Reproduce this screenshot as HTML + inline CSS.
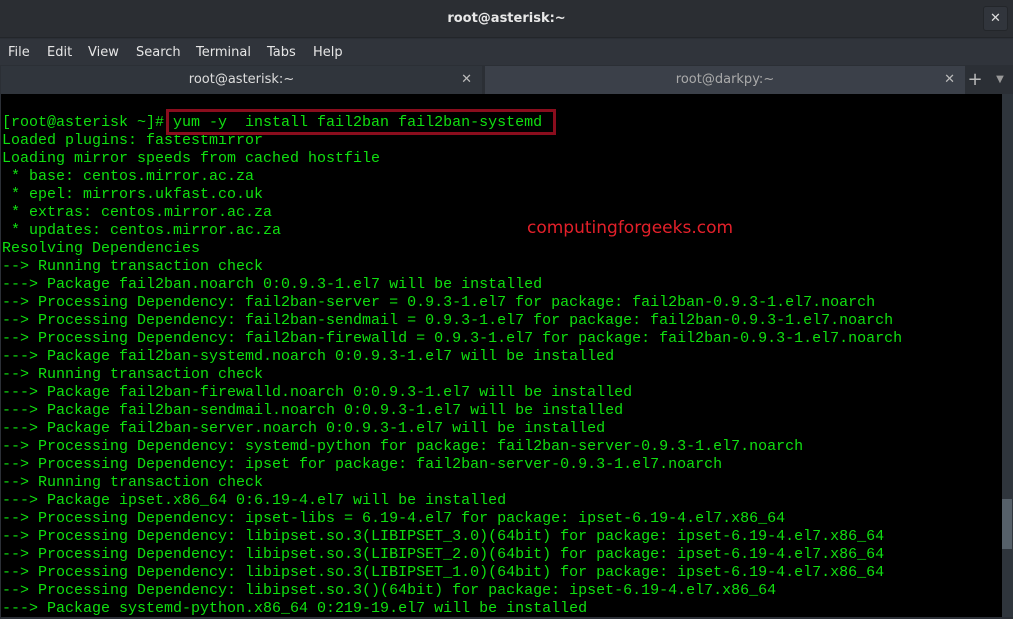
<!DOCTYPE html>
<html><head><meta charset="utf-8"><style>
*{margin:0;padding:0;box-sizing:border-box}
body{width:1013px;height:619px;background:#2b2f36;overflow:hidden;font-family:"DejaVu Sans","Liberation Sans",sans-serif;position:relative}
.title{position:absolute;left:0;top:0;width:1013px;height:38px;background:#2b2e33;border-bottom:1px solid #23262a;color:#e8e8e8;font-weight:bold;font-size:13px;text-align:center;line-height:38px}
.xbtn{position:absolute;right:5px;top:6px;width:25px;height:25px;border:1px solid #23262a;border-radius:3px;background:#31353c;color:#ddd;font-size:13px;line-height:23px;text-align:center}
.menu{position:absolute;left:0;top:39px;width:1013px;height:26px;background:#30343b;color:#e6e6e6;font-size:13px}
.menu span{position:absolute;top:6px}
.tabs{position:absolute;left:0;top:65px;width:1013px;height:29px;background:#2b2f35}
.tab{position:absolute;top:1px;height:28px;font-size:13px;line-height:28px;text-align:center}
.term{position:absolute;left:1px;top:94px;width:1001px;height:523px;background:#000}
.sb{position:absolute;left:1002px;top:94px;width:11px;height:523px;background:#2f353c}
.thumb{position:absolute;left:1002px;top:499px;width:10px;height:50px;background:#566069}
pre{position:absolute;left:2px;top:114px;font-family:"Liberation Mono",monospace;font-size:15px;line-height:18px;color:#10e010;white-space:pre}
.box{position:absolute;left:166px;top:109px;width:390px;height:26px;border:3px solid #8a0d1d}
.wm{position:absolute;left:527px;top:218px;color:#e3202a;font-family:"DejaVu Sans",sans-serif;font-size:17px}
</style></head><body>
<div class="title">root@asterisk:~<div class="xbtn">✕</div></div>
<div class="menu"><span style="left:8px">File</span><span style="left:47px">Edit</span><span style="left:88px">View</span><span style="left:136px">Search</span><span style="left:196px">Terminal</span><span style="left:267px">Tabs</span><span style="left:313px">Help</span></div>
<div class="tabs">
<div class="tab" style="left:1px;width:481px;background:#30353c;color:#ddd">root@asterisk:~<span style="position:absolute;right:10px;color:#bbb">✕</span></div>
<div class="tab" style="left:485px;width:480px;background:#3b4049;color:#aaa">root@darkpy:~<span style="position:absolute;right:10px;color:#bbb">✕</span></div>
<div class="tab" style="left:965px;width:20px;color:#bbb;font-size:18px">+</div>
<div class="tab" style="left:990px;width:20px;color:#999;font-size:10px">▼</div>
</div>
<div class="term"></div>
<div class="sb"></div><div class="thumb"></div>
<pre>[root@asterisk ~]# yum -y  install fail2ban fail2ban-systemd
Loaded plugins: fastestmirror
Loading mirror speeds from cached hostfile
 * base: centos.mirror.ac.za
 * epel: mirrors.ukfast.co.uk
 * extras: centos.mirror.ac.za
 * updates: centos.mirror.ac.za
Resolving Dependencies
--> Running transaction check
---> Package fail2ban.noarch 0:0.9.3-1.el7 will be installed
--> Processing Dependency: fail2ban-server = 0.9.3-1.el7 for package: fail2ban-0.9.3-1.el7.noarch
--> Processing Dependency: fail2ban-sendmail = 0.9.3-1.el7 for package: fail2ban-0.9.3-1.el7.noarch
--> Processing Dependency: fail2ban-firewalld = 0.9.3-1.el7 for package: fail2ban-0.9.3-1.el7.noarch
---> Package fail2ban-systemd.noarch 0:0.9.3-1.el7 will be installed
--> Running transaction check
---> Package fail2ban-firewalld.noarch 0:0.9.3-1.el7 will be installed
---> Package fail2ban-sendmail.noarch 0:0.9.3-1.el7 will be installed
---> Package fail2ban-server.noarch 0:0.9.3-1.el7 will be installed
--> Processing Dependency: systemd-python for package: fail2ban-server-0.9.3-1.el7.noarch
--> Processing Dependency: ipset for package: fail2ban-server-0.9.3-1.el7.noarch
--> Running transaction check
---> Package ipset.x86_64 0:6.19-4.el7 will be installed
--> Processing Dependency: ipset-libs = 6.19-4.el7 for package: ipset-6.19-4.el7.x86_64
--> Processing Dependency: libipset.so.3(LIBIPSET_3.0)(64bit) for package: ipset-6.19-4.el7.x86_64
--> Processing Dependency: libipset.so.3(LIBIPSET_2.0)(64bit) for package: ipset-6.19-4.el7.x86_64
--> Processing Dependency: libipset.so.3(LIBIPSET_1.0)(64bit) for package: ipset-6.19-4.el7.x86_64
--> Processing Dependency: libipset.so.3()(64bit) for package: ipset-6.19-4.el7.x86_64
---> Package systemd-python.x86_64 0:219-19.el7 will be installed</pre>
<div class="box"></div>
<div class="wm">computingforgeeks.com</div>
</body></html>
